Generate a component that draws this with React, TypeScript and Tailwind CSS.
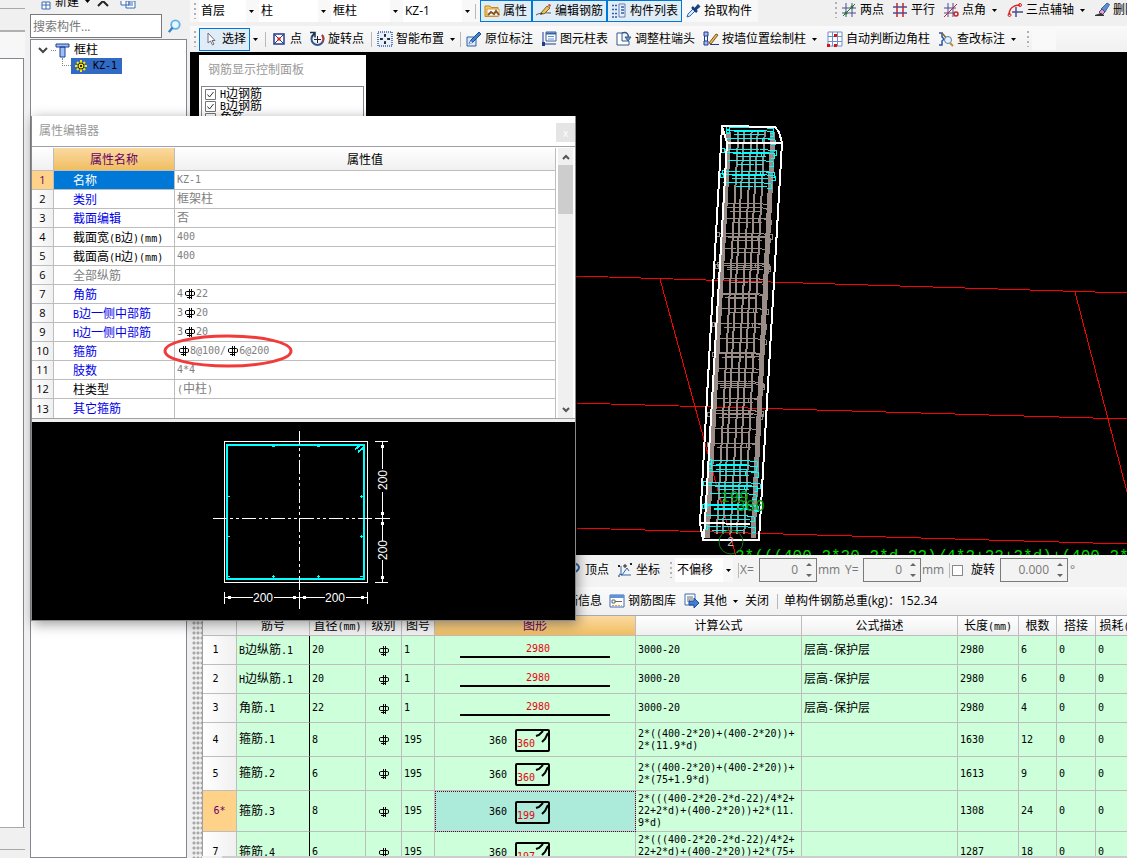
import type { ReactNode } from "react";
import clsx from "clsx";

/* ---------- text helpers ---------- */

// Latin runs use a 6px wide mono face, Chinese runs stay on a 12px grid
function Mono({ children }: { children: string }) {
  const parts = children.split(/([\u4e00-\u9fff]+)/).filter(Boolean);
  return (
    <span className="inline-block align-middle font-['DejaVu_Sans_Mono','Noto_Sans_CJK_SC',monospace] text-[10px] leading-3">
      {parts.map((part, i) =>
        /[\u4e00-\u9fff]/.test(part) ? (
          <span key={i} className="text-xs leading-3">
            {part}
          </span>
        ) : (
          part
        )
      )}
    </span>
  );
}

function Rebar() {
  return (
    <svg viewBox="0 0 10 10" className="inline-block h-[10px] w-[10px] align-middle" fill="none" stroke="#000">
      <path d="M4.500 0v10M6.500 0v10M1.500 2.500h7q1 0 1 1.500v1q0 1.500-1 1.500h-7q-1 0-1-1.500v-1q0-1.500 1-1.500zM2 8.500h4" />
    </svg>
  );
}

function Value({ text }: { text: string }) {
  return (
    <span className="inline-flex items-center align-middle">
      {text.split(/(#)/).map((part, i) =>
        part === "#" ? (
          <span key={i} className="mr-px ml-[2px] flex">
            <Rebar />
          </span>
        ) : part ? (
          <Mono key={i}>{part}</Mono>
        ) : null
      )}
    </span>
  );
}

/* ---------- icons ---------- */

const icons: Record<string, ReactNode> = {
  attr: (
    <>
      <path d="M1 3h5l1 1.500h7v9H1z" fill="#f7c96b" stroke="#c8861c" />
      <path d="M3 6h12v7H3z" fill="#fff" stroke="#d89a3a" />
      <path d="M4 12l3-3 3 2 2-3 3 4" stroke="#7d5a2a" strokeWidth="2" fill="none" />
    </>
  ),
  pencil: (
    <>
      <path d="M0 12c5-3 10-2 15-2" stroke="#555" fill="none" />
      <path d="M5 10l6-7 3 2-6 6z" fill="#eac25c" stroke="#8b6420" />
      <path d="M12 2l1-1 2 1-1 2z" fill="#c33" />
      <path d="M4 12l1-2 2 1z" fill="#222" />
    </>
  ),
  list: (
    <>
      <path d="M1 2.500h5M1 6.500h5M1 10.500h5M1 14h5" stroke="#2e5fb0" strokeWidth="1.500" strokeDasharray="2 1" />
      <path d="M8 1h6v13H8z" fill="#e6effa" stroke="#6b7fa8" />
      <path d="M10 4h3M10 7h3M10 10h3" stroke="#2e5fb0" strokeWidth="1.500" />
    </>
  ),
  picker: (
    <>
      <path d="M2 14l1-3 6-6 2 2-6 6z" fill="#dcebfb" stroke="#2a67b8" />
      <path d="M7 4l5 5" stroke="#17407f" strokeWidth="2.500" />
      <path d="M9.500 5.500l3.500-4 2 2-4 3.500z" fill="#17407f" stroke="#17407f" />
    </>
  ),
  twoPoint: (
    <>
      <path d="M1 6h14M1 11h14M5 1v14M11 1v14" stroke="#4c4c94" />
      <path d="M2 14L14 2" stroke="#227722" />
      <circle cx="5" cy="11" r="1.500" fill="#227722" />
      <circle cx="11" cy="5" r="1.500" fill="#227722" />
    </>
  ),
  parallel: (
    <>
      <path d="M5 1v14M11 1v14" stroke="#c22" strokeWidth="1.500" />
      <path d="M1 5h14M1 11h14" stroke="#4c4c94" strokeWidth="1.500" />
    </>
  ),
  pointAngle: (
    <>
      <path d="M1 6h12M1 11h10M5 1v14M10 1v14" stroke="#4c4c94" />
      <path d="M1 15L14 2" stroke="#c22" />
      <circle cx="13" cy="12" r="2" stroke="#c22" fill="none" strokeWidth="1.500" />
    </>
  ),
  arcAxis: (
    <>
      <path d="M9 5v10M5 10h11" stroke="#4c4c94" strokeWidth="1.500" />
      <path d="M2 13C2 7 6 3 13 3" stroke="#d22" strokeWidth="1.500" fill="none" />
      <circle cx="2.500" cy="13" r="1.500" stroke="#d22" />
      <circle cx="13" cy="3" r="1.500" stroke="#d22" />
    </>
  ),
  eraser: (
    <>
      <path d="M7 7l6-6 2.500 1.500L11 10z" fill="#5b8fd6" stroke="#44699f" />
      <path d="M5 10l3-3 3 3-3 3z" fill="#d9a6c8" stroke="#5a3c80" />
      <path d="M1 13.500h9l-3-2z" fill="#333" stroke="#333" />
    </>
  ),
  arrow: <path d="M5 2v10l2.500-2 2 4 1.500-1-2-3.500h3z" fill="#fff" stroke="#6c6c84" />,
  point: (
    <>
      <path d="M3 3h10v10H3z" fill="#fff" stroke="#223a8c" strokeWidth="1.500" />
      <path d="M4 4l8 8M12 4l-8 8" stroke="#223a8c" />
      <path d="M6.500 6.500h3v3h-3z" fill="#d22" />
    </>
  ),
  rotate: (
    <>
      <path d="M4 4a6 6 0 1 0 9 0" stroke="#31588f" strokeWidth="2" fill="none" />
      <path d="M1 1.500h5v5M6 1.500l-3 4" stroke="#16304f" strokeWidth="1.500" fill="none" />
      <path d="M8.500 5v7M5 8.500h7" stroke="#223" />
      <path d="M13 4c2 2 2 5 0 7" stroke="#c33" strokeWidth="1.500" fill="none" />
    </>
  ),
  smart: (
    <>
      <path d="M1 1h14v14H1z" fill="#e8f0fb" stroke="#3562a5" strokeWidth="1.500" strokeDasharray="1 1" />
      <path d="M8 3v3M8 10v3M3 8h3M10 8h3" stroke="#111" strokeWidth="1.500" />
      <path d="M7 4h2M7 12h2M4 7v2M12 7v2" stroke="#111" />
    </>
  ),
  annotate: (
    <>
      <path d="M1 6h9v9H1z" fill="#dce9f9" stroke="#2d5fa8" />
      <path d="M3 13l2-4 8-8 2 2-8 8z" fill="#3f83cf" stroke="#1f4d8f" />
      <path d="M3 13l2-3 1 2z" fill="#fff" />
    </>
  ),
  tableCol: (
    <>
      <path d="M5 1h10v9H5z" fill="#fff" stroke="#3562a5" />
      <path d="M5 2.500h10" stroke="#3562a5" strokeWidth="2" />
      <path d="M7 5.500h6M7 8h6" stroke="#6b8fc9" />
      <path d="M2 1v14M1 13h14" stroke="#223a8c" />
      <path d="M1 11h3v4H1z" fill="#223a8c" />
    </>
  ),
  adjust: (
    <>
      <path d="M1 2h5v8h7v4H1z" fill="#fff" stroke="#31588f" />
      <path d="M6 2c5-2 7 2 6 5" stroke="#31588f" fill="none" strokeWidth="1.500" />
      <path d="M9 6h6l-3 4z" fill="#6c97cf" stroke="#31588f" />
    </>
  ),
  wall: (
    <>
      <path d="M1 1h4v4H1zM1 10h4v4H1z" fill="#9dc0ee" stroke="#223a8c" />
      <path d="M1.500 5v5M4.500 5v5M7 13.500h9" stroke="#223a8c" />
      <path d="M6 12l7-9 2 1-7 9z" fill="#e9bf55" stroke="#80511a" />
    </>
  ),
  grid: (
    <>
      <path d="M1 1h14v14H1z" fill="#fff" />
      <path d="M1 1v14M5.500 1v14M10.500 1v14M15 1v14M1 1h14M1 5.500h14M1 10.500h14M1 15h14" stroke="#6d8fc6" />
      <path d="M7 3h3v3H7zM0 13h3v3H0zM7 13h3v3H7z" fill="#d11" />
    </>
  ),
  check: (
    <>
      <path d="M1 2h3v4l2 2-2 2v4H1" stroke="#2456a8" strokeWidth="1.500" fill="none" />
      <path d="M4 2l6 7" stroke="#8b6420" strokeWidth="1.500" />
      <circle cx="10" cy="9" r="3.500" fill="#e5f1fb" stroke="#5580ae" />
      <path d="M12 12l3 3" stroke="#c88a3a" strokeWidth="2" />
    </>
  ),
  vertex: <path d="M6 3q5-3 7 2q0 3-4 5M9 12v2" stroke="#2f64ab" strokeWidth="2" fill="none" />,
  coord: (
    <>
      <path d="M4 4v9M2 12l3 1 5-7 2 3M4 13h10" stroke="#2f64ab" fill="none" />
      <path d="M1 3l2 2M3 3L1 5M13 1l2 2M15 1l-2 2M1 14h2M7 3h2v2H7z" stroke="#222" />
    </>
  ),
  library: (
    <>
      <path d="M1 2h14v12H1z" fill="#fff" stroke="#3b6bb4" />
      <path d="M1 3.500h14" stroke="#5e93dc" strokeWidth="3" />
      <path d="M3 7h3v3H3zM6 8.500h7" stroke="#666" fill="none" />
      <path d="M3 12.500h10" stroke="#e5a13c" strokeDasharray="2 1" />
    </>
  ),
  other: (
    <>
      <path d="M1 1h10v11H1z" fill="#fff" stroke="#3b6bb4" />
      <path d="M3 4h6M3 6h6M3 8h3" stroke="#666" />
      <path d="M5 8h5V5l5 5-5 5v-3H5z" fill="#3f7fd9" stroke="#1f4d8f" />
    </>
  ),
};

function Icon({ name }: { name: string }) {
  return (
    <svg viewBox="0 0 16 16" className="h-4 w-4 shrink-0" fill="none" aria-hidden="true">
      {icons[name]}
    </svg>
  );
}

function Caret() {
  return (
    <svg viewBox="0 0 5 3" className="h-[3px] w-[5px] shrink-0" aria-hidden="true">
      <path d="M0 0h5L2.500 3z" fill="#000" />
    </svg>
  );
}

/* ---------- toolbar parts ---------- */

function Grip() {
  return (
    <span className="mr-[3px] ml-1 h-4 w-[2px] shrink-0 bg-[repeating-linear-gradient(to_bottom,#b0b0b0_0_2px,transparent_2px_5px)]" />
  );
}

function Sep() {
  return <span className="h-[15px] w-px shrink-0 bg-[#b8b8b8]" />;
}

type ToolProps = { icon?: string; label: string; width: string; active?: boolean; caret?: boolean };

function Tool({ icon, label, width, active, caret }: ToolProps) {
  return (
    <button
      className={clsx(
        "flex h-full shrink-0 items-center gap-[3px] border text-left whitespace-nowrap",
        active ? "border-[#0078d7] bg-[#e0edf7] pl-[3px]" : "border-transparent",
        width
      )}
    >
      {icon && <Icon name={icon} />}
      <span>{label}</span>
      {caret && (
        <span className="pl-[3px]">
          <Caret />
        </span>
      )}
    </button>
  );
}

function Combo({ value, width, label }: { value: string; width: string; label: string }) {
  return (
    <span className={clsx("flex h-full shrink-0 items-center", width)}>
      <select aria-label={label} className="h-full min-w-0 flex-1 appearance-none bg-white pl-[2px] text-xs outline-none">
        <option>{value}</option>
      </select>
      <span className="flex h-full w-[10px] items-center justify-center bg-[#f8f8f8]">
        <Caret />
      </span>
    </span>
  );
}

function Spin({ id, value, width }: { id: string; value: string; width: string }) {
  return (
    <span className={clsx("flex h-6 shrink-0 items-center border border-[#7a7a7a] bg-[#f3f3f3] pr-1 text-[#777]", width)}>
      <input id={id} defaultValue={value} className="w-full min-w-0 flex-1 bg-transparent pr-2 text-right text-xs outline-none" />
      <svg viewBox="0 0 6 16" className="h-4 w-[6px]" fill="#666" aria-hidden="true">
        <path d="M3 1l3 3H0zM3 15l3-3H0z" />
      </svg>
    </span>
  );
}

function TopToolbars() {
  return (
    <header className="shrink-0 bg-[#f0f0f0] text-xs">
      <div className="flex h-[26px] items-start overflow-hidden">
        <div className="flex h-[22px] shrink-0 items-center bg-[#f8f8f8]">
          <Grip />
          <div className="flex h-full w-[281px] items-center gap-[3px]">
            <Combo label="楼层" value="首层" width="w-[57px]" />
            <Combo label="构件类别" value="柱" width="w-[69px]" />
            <Combo label="构件类型" value="框柱" width="w-[69px]" />
            <Combo label="构件名称" value="KZ-1" width="w-[69px]" />
            <Sep />
          </div>
          <Tool icon="attr" label="属性" width="w-[52px]" active />
          <Tool icon="pencil" label="编辑钢筋" width="w-[75px]" active />
          <Tool icon="list" label="构件列表" width="w-[75px]" active />
          <span className="w-[2px]" />
          <Tool icon="picker" label="拾取构件" width="w-[74px]" />
        </div>
        <div className="ml-[73px] flex h-5 shrink-0 items-center">
          <Grip />
          <Tool icon="twoPoint" label="两点" width="w-[51px]" />
          <Tool icon="parallel" label="平行" width="w-[51px]" />
          <Tool icon="pointAngle" label="点角" width="w-[64px]" caret />
          <Tool icon="arcAxis" label="三点辅轴" width="w-[87px]" caret />
          <Tool icon="eraser" label="删除" width="w-[51px]" />
        </div>
      </div>
      <div className="flex h-[26px] items-center overflow-hidden bg-linear-to-b from-[#fafafa] to-[#f0f0f0]">
        <Grip />
        <div className="flex h-[23px] shrink-0 items-center">
          <Tool icon="arrow" label="选择" width="w-[51px]" active />
          <span className="flex w-[15px] pl-[3px]">
            <Caret />
          </span>
          <Sep />
          <span className="w-1" />
          <Tool icon="point" label="点" width="w-[38px]" />
          <Tool icon="rotate" label="旋转点" width="w-[63px]" />
          <Sep />
          <span className="w-1" />
          <Tool icon="smart" label="智能布置" width="w-[84px]" caret />
          <Sep />
          <span className="w-1" />
          <Tool icon="annotate" label="原位标注" width="w-[75px]" />
          <Tool icon="tableCol" label="图元柱表" width="w-[75px]" />
          <Tool icon="adjust" label="调整柱端头" width="w-[87px]" />
          <Tool icon="wall" label="按墙位置绘制柱" width="w-[124px]" caret />
          <Tool icon="grid" label="自动判断边角柱" width="w-[111px]" />
          <Tool icon="check" label="查改标注" width="w-[86px]" caret />
        </div>
        <Grip />
        <span className="h-[22px] w-6 bg-[#f9f9f9]" />
      </div>
    </header>
  );
}

/* ---------- left side ---------- */

function EdgeStrip() {
  return (
    <div className="flex w-[25px] shrink-0 flex-col bg-[#f0f0f0]">
      <div className="h-[9px] border-b border-[#a8a8a8]" />
      <div className="h-[23px] border-b-2 border-[#b0b0b0]" />
      <div className="h-[26px] bg-[#f7f7f7]" />
      <div className="mr-px flex-1 border-t border-r border-[#828790] bg-white" />
      <div className="h-[23px] border-y border-[#a8a8a8]" />
      <div className="h-[8px]" />
    </div>
  );
}

function ComponentTree() {
  return (
    <aside className="mr-[3px] ml-[5px] flex w-[157px] shrink-0 flex-col text-xs">
      <div className="flex h-[13px] shrink-0 items-end gap-1 overflow-hidden pl-[11px]">
        <svg viewBox="0 0 10 12" className="h-3 w-[10px]" fill="#fff" stroke="#3b6bb4" aria-hidden="true">
          <path d="M1 1h8v7H1zM1 4h8M5 1v7" />
        </svg>
        <button className="flex h-[13px] items-center gap-[6px] pb-[10px] leading-3 whitespace-nowrap">
          新建 <Caret />
        </button>
        <svg viewBox="0 0 12 12" className="ml-[3px] h-3 w-3 shrink-0" fill="none" stroke="#222" strokeWidth="2" aria-hidden="true">
          <path d="M1 5l5-5 5 5" />
        </svg>
        <svg viewBox="0 0 16 12" className="ml-[7px] h-3 w-4 shrink-0" fill="#fff" stroke="#3b6bb4" aria-hidden="true">
          <path d="M1 -1h8v5H1zM6 0h9v7H6zM8 2h5M8 4h5" />
        </svg>
      </div>
      <div className="flex h-[26px] shrink-0 items-start pt-px">
        <input
          aria-label="搜索构件"
          placeholder="搜索构件..."
          className="h-6 w-[132px] border border-[#7a7a7a] bg-white px-[2px] text-xs placeholder:text-[#777] focus:outline-none"
        />
        <button aria-label="搜索" className="ml-[5px] flex h-6 w-4 items-center">
          <svg viewBox="0 0 16 16" className="h-[15px] w-[15px]" fill="none" aria-hidden="true">
            <circle cx="9" cy="6" r="4.500" stroke="#5fb3ea" strokeWidth="2" fill="#eaf6fe" />
            <path d="M6 9l-4 5" stroke="#3b7fc4" strokeWidth="2.500" />
          </svg>
        </button>
      </div>
      <div className="flex-1 border border-[#828790] bg-white pt-[2px]">
        <div className="flex h-4 items-center pl-[7px]">
          <svg viewBox="0 0 36 16" className="h-4 w-9 shrink-0" fill="none" aria-hidden="true">
            <path d="M1 6l4 4 4-4" stroke="#444" strokeWidth="2" />
            <path d="M13 8.500h5" stroke="#888" strokeDasharray="1 1" />
            <path d="M18 2h13v3H18zM22 5h5v10h-5z" fill="#9cc0f2" stroke="#1f3f95" />
          </svg>
          <span>框柱</span>
        </div>
        <div className="flex h-4 items-center pl-[31px]">
          <span className="mb-2 h-2 w-[9px] shrink-0 border-b border-l border-dotted border-[#888]" />
          <span className="flex h-4 w-[51px] items-center bg-[#316ac5] pl-1">
            <svg viewBox="0 0 12 12" className="mr-[6px] h-3 w-3" fill="none" aria-hidden="true">
              <path d="M6 0v12M0 6h12M2 2l8 8M10 2l-8 8" stroke="#ffe600" strokeWidth="2" />
              <circle cx="6" cy="6" r="3" fill="#ffe600" stroke="#222" />
              <path d="M5 5h2v2H5z" fill="#222" />
            </svg>
            <Mono>KZ-1</Mono>
          </span>
        </div>
      </div>
    </aside>
  );
}

/* ---------- 3D view ---------- */

const leftBar = (y: number) => 729 - (y - 143) * 0.055;
const rightBar = (y: number) => 773 - (y - 143) * 0.05;

function at(t: number, y: number) {
  return leftBar(y) + (rightBar(y) - leftBar(y)) * t;
}

type StirrupProps = { from: number; to: number; step: number; color: string };

function Stirrups({ from, to, step, color }: StirrupProps) {
  const count = Math.floor((to - from) / step);
  return (
    <g stroke={color} fill="none" shapeRendering="crispEdges">
      {Array.from({ length: count }, (_, i) => {
        const y = Math.round(from + i * step);
        const l = leftBar(y) - (i % 3) * 2;
        const r = rightBar(y) + ((i * 2) % 5);
        return (
          <g key={i}>
            <path d={`M${l} ${y}L${at(0.3, y)} ${y - 1}H${at(0.7, y)}L${r} ${y + 1}v4h-4`} />
            <path d={`M${at(i % 2 ? 0.2 : 0.1, y)} ${y + 3}H${at(0.6, y)}l${8 + (i % 3) * 3} 1`} />
            {i % 2 === 0 && <path d={`M${l - 3} ${y - 2}h3v4h-3z`} />}
            {i % 3 === 1 && <path d={`M${at(0.75, y)} ${y + 4}v-5h8`} />}
          </g>
        );
      })}
    </g>
  );
}

function ModelView() {
  return (
    <svg viewBox="190 52 937 503" preserveAspectRatio="xMidYMid slice" className="block h-full w-full" fill="none">
      <g stroke="#f00" shapeRendering="crispEdges">
        <path d="M190 265L576 276L1127 293M190 391L576 403L1127 419M190 517L576 528L1127 544M660 279L737 560M1075 292L1127 492" />
      </g>
      <g stroke="#9a8c86" shapeRendering="crispEdges">
        <path d="M729 132L707 538M773 132L753 538" strokeWidth="5" />
        {[0.2, 0.33, 0.5, 0.64, 0.8].map((t) => (
          <path key={t} d={`M${at(t, 130)} 130L${at(t, 534)} 534`} strokeWidth="2" />
        ))}
      </g>
      <Stirrups from={204} to={462} step={15} color="#9a8c86" />
      <Stirrups from={208} to={462} step={29} color="#9a8c86" />
      <Stirrups from={128} to={204} step={11} color="#00ffff" />
      <Stirrups from={131} to={198} step={22} color="#00ffff" />
      <Stirrups from={461} to={540} step={11} color="#00ffff" />
      <Stirrups from={466} to={530} step={20} color="#00ffff" />
      <g stroke="#fff" strokeWidth="2" shapeRendering="crispEdges">
        <path d="M727 143L722 126L775 127L779 132L782 143zM722 126L700 523L703 540H759L782 143M727 143L704 538" />
        <path d="M700 523L750 524" />
      </g>
      <g fill="#009c10" className="font-['Liberation_Mono',monospace] text-base">
        <text x="720" y="502">199</text>
        <text x="736" y="511">360</text>
        <text x="735" y="561" fill="#00d800">2*(((400-2*20-2*d-22)/4*2+22+2*d)+(400-2*20))+2*(11.9*d)</text>
        <text x="727" y="546" fill="#bbb" className="text-xs">2</text>
      </g>
      <circle cx="731" cy="542" r="12" stroke="#0a7a14" />
    </svg>
  );
}

function RebarPanel() {
  return (
    <div className="absolute top-[3px] left-[9px] w-[167px] bg-white px-[2px]">
      <h2 className="h-[31px] pl-[7px] text-xs leading-[30px] text-[#999]">钢筋显示控制面板</h2>
      <div className="flex h-[60px] flex-col overflow-hidden border border-[#828790] pt-px">
        {["H边钢筋", "B边钢筋", "角筋"].map((name) => (
          <label key={name} className="flex h-3 shrink-0 items-center gap-1 pl-[3px]">
            <input type="checkbox" defaultChecked className="peer sr-only" />
            <svg viewBox="0 0 11 11" className="h-[11px] w-[11px] shrink-0" fill="#fff" stroke="#777" aria-hidden="true">
              <path d="M.5.5h10v10H.5z" />
              <path d="M2.500 5.500l2 2.500 4-5" stroke="#333" fill="none" />
            </svg>
            <Mono>{name}</Mono>
          </label>
        ))}
      </div>
    </div>
  );
}

/* ---------- bottom toolbars and table ---------- */

function OffsetBar() {
  return (
    <div className="flex h-8 shrink-0 items-center overflow-hidden bg-[#f3f3f3] pb-[2px] pl-[375px] text-xs">
      <Tool icon="vertex" label="顶点" width="w-[51px]" />
      <Tool icon="coord" label="坐标" width="w-[50px]" />
      <span className="flex h-6 w-[72px] shrink-0 items-center">
        <Grip />
        <Combo label="偏移方式" value="不偏移" width="w-[58px]" />
      </span>
      <Sep />
      <label htmlFor="offset-x" className="w-5 shrink-0 pl-px text-[#777]">X=</label>
      <Spin id="offset-x" value="0" width="w-[58px]" />
      <span className="w-7 shrink-0 pl-px text-[#777]">mm</span>
      <label htmlFor="offset-y" className="w-[18px] shrink-0 text-[#777]">Y=</label>
      <Spin id="offset-y" value="0" width="w-[58px]" />
      <span className="w-7 shrink-0 pl-px text-[#777]">mm</span>
      <Sep />
      <label className="flex w-[50px] shrink-0 items-center gap-2 pl-[2px]">
        <input type="checkbox" className="h-[11px] w-[11px] appearance-none border border-[#888] bg-white" />
        旋转
      </label>
      <Spin id="rotate" value="0.000" width="w-[68px]" />
      <label htmlFor="rotate" className="pl-[2px] text-[#777]">°</label>
    </div>
  );
}

function InfoBar() {
  return (
    <div className="flex h-[29px] shrink-0 items-center overflow-hidden border-b border-[#a9a9b2] bg-linear-to-b from-[#fbfbfb] to-[#f0f0f0] pl-[363px] text-xs">
      <Tool label="钢筋信息" width="w-[55px]" />
      <Tool icon="library" label="钢筋图库" width="w-[75px]" />
      <Tool icon="other" label="其他" width="w-[61px]" caret />
      <Tool label="关闭" width="w-[33px]" />
      <Sep />
      <span className="pl-[6px] whitespace-nowrap">单构件钢筋总重(kg)：152.34</span>
    </div>
  );
}

const columns = [
  { title: "", width: "w-[34px]" },
  { title: "筋号", width: "w-[73px]" },
  { title: "直径(mm)", width: "w-[56px]" },
  { title: "级别", width: "w-[36px]" },
  { title: "图号", width: "w-[33px]" },
  { title: "图形", width: "w-[201px]" },
  { title: "计算公式", width: "w-[166px]" },
  { title: "公式描述", width: "w-[156px]" },
  { title: "长度(mm)", width: "w-[61px]" },
  { title: "根数", width: "w-[38px]" },
  { title: "搭接", width: "w-[39px]" },
  { title: "损耗(%)", width: "w-[50px]" },
];

const COVER = "层高-保护层";
const LONG = "2*(((400-2*20-2*d-22)/4*2+22+2*d)+(400-2*20))+2*";

const bars = [
  { no: "1", name: "B边纵筋.1", dia: "20", shape: "1", size: "2980", formula: "3000-20", note: COVER, length: "2980", count: "6", height: "h-[29px]" },
  { no: "2", name: "H边纵筋.1", dia: "20", shape: "1", size: "2980", formula: "3000-20", note: COVER, length: "2980", count: "6", height: "h-[29px]" },
  { no: "3", name: "角筋.1", dia: "22", shape: "1", size: "2980", formula: "3000-20", note: COVER, length: "2980", count: "4", height: "h-[29px]" },
  { no: "4", name: "箍筋.1", dia: "8", shape: "195", size: "360", formula: "2*((400-2*20)+(400-2*20))+2*(11.9*d)", note: "", length: "1630", count: "12", height: "h-[34px]" },
  { no: "5", name: "箍筋.2", dia: "6", shape: "195", size: "360", formula: "2*((400-2*20)+(400-2*20))+2*(75+1.9*d)", note: "", length: "1613", count: "9", height: "h-[34px]" },
  { no: "6*", name: "箍筋.3", dia: "8", shape: "195", size: "199", formula: LONG + "(11.9*d)", note: "", length: "1308", count: "24", height: "h-[41px]" },
  { no: "7", name: "箍筋.4", dia: "6", shape: "195", size: "197", formula: LONG + "(75+1.9*d)", note: "", length: "1287", count: "18", height: "h-[41px]" },
];

function BarShape({ shape, size }: { shape: string; size: string }) {
  if (shape === "1") {
    return (
      <div className="mx-auto flex w-[150px] justify-center border-b-2 border-black pb-px pl-[6px] text-red-600">
        <Mono>{size}</Mono>
      </div>
    );
  }
  return (
    <div className="flex items-center pt-[2px] pl-[54px]">
      <Mono>360</Mono>
      <span className="ml-2 flex h-[23px] w-[35px] items-end rounded-[2px] border-2 border-black text-red-600">
        <Mono>{size}</Mono>
        <svg viewBox="0 0 13 19" className="h-[19px] w-[13px] shrink-0" stroke="#000" strokeWidth="2" fill="none" aria-hidden="true">
          <path d="M1 5l3-1 4-4M7 11l3-3 3-6" />
        </svg>
      </span>
    </div>
  );
}

function BarTable() {
  const cell = "border-r border-b border-[#bdbdbd] p-0 pl-[2px] text-left leading-3";
  return (
    <div className="flex h-[242px] shrink-0 bg-[#f0f0f0]">
      <div className="ml-[2px] w-[10px] shrink-0 bg-[radial-gradient(circle_at_2px_2px,#a8a8a8_1px,transparent_2px)] bg-size-[4px_5px]" />
      <div className="flex min-w-0 flex-1 flex-col overflow-hidden">
        <div className="min-h-0 flex-1 overflow-hidden bg-white">
          <table className="w-[943px] table-fixed border-separate border-spacing-0 border-l border-[#a0a0a0] text-xs">
            <thead>
              <tr className="h-5">
                {columns.map((c) => (
                  <th
                    key={c.title}
                    className={clsx(
                      "border-r border-b border-[#bdbdbd] p-0 pt-[2px] text-center leading-3 font-normal whitespace-nowrap",
                      c.width,
                      c.title === "图形" ? "bg-linear-to-b from-[#fbd9a0] to-[#f0be60] text-[#660066]" : "bg-linear-to-b from-white to-[#f0f0f0]"
                    )}
                  >
                    <Mono>{c.title}</Mono>
                  </th>
                ))}
              </tr>
            </thead>
            <tbody className="bg-[#ccffda]">
              {bars.map((b) => {
                const current = b.no === "6*";
                return (
                  <tr key={b.no} className={b.height}>
                    <th
                      className={clsx(
                        "border-r border-b border-[#bdbdbd] p-0 text-center leading-3 font-normal",
                        current ? "bg-[#ffd28a] text-[#660066]" : "bg-linear-to-r from-white to-[#f0f0f0] pr-2"
                      )}
                    >
                      <Mono>{b.no}</Mono>
                    </th>
                    <td className="border-r border-b border-r-black border-b-[#bdbdbd] p-0 pl-[2px] leading-3 whitespace-nowrap"><Mono>{b.name}</Mono></td>
                    <td className={cell}><Mono>{b.dia}</Mono></td>
                    <td className="border-r border-b border-[#bdbdbd] p-0 text-center leading-3"><Rebar /></td>
                    <td className={cell}><Mono>{b.shape}</Mono></td>
                    <td className={clsx("border-r border-b border-[#bdbdbd] p-0 leading-3", current && "bg-[#aceada] outline-1 -outline-offset-1 outline-[#660033] outline-dotted")}>
                      <BarShape shape={b.shape} size={b.size} />
                    </td>
                    <td className={clsx(cell, "pr-1 break-all")}><Mono>{b.formula}</Mono></td>
                    <td className={cell}><Mono>{b.note}</Mono></td>
                    <td className={cell}><Mono>{b.length}</Mono></td>
                    <td className={cell}><Mono>{b.count}</Mono></td>
                    <td className={cell}><Mono>0</Mono></td>
                    <td className={cell}><Mono>0</Mono></td>
                  </tr>
                );
              })}
            </tbody>
          </table>
        </div>
        <div className="ml-5 h-[2px] shrink-0 bg-[#cdcdcd]" />
      </div>
    </div>
  );
}

/* ---------- property editor ---------- */

const props = [
  { name: "名称", value: "KZ-1", tone: "bg-[#0078d7] text-white" },
  { name: "类别", value: "框架柱", tone: "text-[#0000e8]" },
  { name: "截面编辑", value: "否", tone: "text-[#0000e8]" },
  { name: "截面宽(B边)(mm)", value: "400", tone: "text-black" },
  { name: "截面高(H边)(mm)", value: "400", tone: "text-black" },
  { name: "全部纵筋", value: "", tone: "text-[#808080]" },
  { name: "角筋", value: "4#22", tone: "text-[#0000e8]" },
  { name: "B边一侧中部筋", value: "3#20", tone: "text-[#0000e8]" },
  { name: "H边一侧中部筋", value: "3#20", tone: "text-[#0000e8]" },
  { name: "箍筋", value: "#8@100/#6@200", tone: "text-[#0000e8]" },
  { name: "肢数", value: "4*4", tone: "text-[#0000e8]" },
  { name: "柱类型", value: "(中柱)", tone: "text-black" },
  { name: "其它箍筋", value: "", tone: "text-[#0000e8]" },
];

function SectionDrawing() {
  return (
    <svg viewBox="32 422 543 198" className="block h-[198px] w-full bg-black" fill="none" shapeRendering="crispEdges">
      <path d="M224.500 441.500h143v141h-143z" stroke="#fff" />
      <path d="M227 445h137v134H227z" stroke="#0ff" strokeWidth="2" />
      <path d="M355 449l5-3M358 452l5-4" stroke="#0ff" strokeWidth="2" />
      <path
        d="M272 446.500h3M317 446.500h3M272 576.500h3M317 576.500h3M273.500 575v3M318.500 575v3M228 496.500h2M228 536.500h2M228 576.500h2M360 496.500h3M360 536.500h3M361.500 495v3M361.500 535v3M360 576.500h3"
        stroke="#0ff"
      />
      <path d="M299.500 431v178M213 518.500h177" stroke="#fff" strokeDasharray="14 3 3 3 3 3" />
      <path d="M375 441.500h13M375 518.500h15M375 582.500h13M382.500 441v28M382.500 492v49M382.500 560v23" stroke="#fff" />
      <path d="M224.500 592v12M367.500 592v12M224 597.500h29M274 597.500h51M346 597.500h22M299.500 592v14" stroke="#fff" />
      <path
        d="M225 597.500l6-2v4zM299 597.500l-6-2v4zM300 597.500l6-2v4zM367 597.500l-6-2v4zM382.500 442l-2 6h4zM382.500 518l-2-6h4zM382.500 519l-2 6h4zM382.500 582l-2-6h4z"
        fill="#fff"
      />
      <g fill="#fff" className="font-['Liberation_Sans',sans-serif] text-xs">
        <text x="253" y="602">200</text>
        <text x="325" y="602">200</text>
        <text transform="translate(387 490) rotate(-90)">200</text>
        <text transform="translate(387 560) rotate(-90)">200</text>
      </g>
    </svg>
  );
}

function PropertyEditor() {
  return (
    <section className="absolute top-[116px] left-[31px] w-[545px] border border-t-0 border-[#8a8a8a] bg-white shadow-[2px_3px_12px_rgba(0,0,0,0.4)]">
      <div className="flex h-[30px] items-center justify-between pl-[7px]">
        <h1 className="text-xs text-[#999]">属性编辑器</h1>
        <button aria-label="关闭" className="mt-[3px] h-[19px] w-[19px] bg-[#e5e5e5] text-[10px] leading-4 text-white">
          x
        </button>
      </div>
      <div className="relative flex border-y border-[#a0a0a8] pt-px pr-[2px]">
        <table className="flex-1 table-fixed border-separate border-spacing-0 text-xs">
          <thead>
            <tr className="h-[23px]">
              <th className="w-[22px] border-r border-b border-[#bdbdbd] bg-linear-to-b from-white to-[#f0f0f0]" />
              <th className="w-[121px] border-r border-b border-[#bdbdbd] bg-linear-to-b from-[#fbd9a0] to-[#f0be60] p-0 pt-px font-normal text-[#660066]">属性名称</th>
              <th className="border-r border-b border-[#bdbdbd] bg-linear-to-b from-white to-[#f0f0f0] p-0 pt-px font-normal">属性值</th>
            </tr>
          </thead>
          <tbody>
            {props.map((p, i) => (
              <tr key={p.name} className="h-[19px]">
                <th
                  className={clsx(
                    "border-r border-[#bdbdbd] p-0 text-center text-[11px] leading-[18px] font-normal",
                    i < props.length - 1 && "border-b",
                    i === 0 ? "bg-[#ffd28a] text-[#660066]" : "bg-linear-to-r from-white to-[#f0f0f0]"
                  )}
                >
                  {i + 1}
                </th>
                <td
                  className={clsx(
                    "border-r border-[#bdbdbd] p-0 pt-[2px] pl-[19px] leading-3 whitespace-nowrap",
                    i < props.length - 1 && "border-b",
                    p.tone
                  )}
                >
                  <Mono>{p.name}</Mono>
                </td>
                <td className={clsx("border-r border-[#bdbdbd] p-0 pl-[2px] leading-3 text-[#808080]", i < props.length - 1 && "border-b")}>
                  <Value text={p.value} />
                </td>
              </tr>
            ))}
          </tbody>
        </table>
        <div className="ml-[2px] flex w-[15px] flex-col items-center bg-[#f0f0f0]">
          <svg viewBox="0 0 8 17" className="h-[17px] w-2" fill="none" stroke="#555" strokeWidth="2" aria-hidden="true">
            <path d="M1 11l3-3 3 3" />
          </svg>
          <div className="h-[49px] w-full bg-[#cdcdcd]" />
          <span className="flex-1" />
          <svg viewBox="0 0 8 17" className="h-[17px] w-2" fill="none" stroke="#555" strokeWidth="2" aria-hidden="true">
            <path d="M1 7l3 3 3-3" />
          </svg>
        </div>
        <svg viewBox="0 0 130 34" className="absolute top-[187px] left-[131px] h-[34px] w-[130px]" fill="none" aria-hidden="true">
          <ellipse cx="65" cy="17" rx="63" ry="15" stroke="#f23a3a" strokeWidth="3" />
        </svg>
      </div>
      <div className="h-[3px] bg-[#f0f0f0]" />
      <SectionDrawing />
    </section>
  );
}

export default function App() {
  return (
    <div className="relative flex h-screen overflow-hidden bg-[#f0f0f0] font-['Open_Sans','Noto_Sans_CJK_SC',sans-serif] text-black">
      <EdgeStrip />
      <ComponentTree />
      <main className="flex min-w-0 flex-1 flex-col">
        <TopToolbars />
        <div className="relative min-h-0 flex-1 overflow-hidden bg-black">
          <ModelView />
          <RebarPanel />
        </div>
        <OffsetBar />
        <InfoBar />
        <BarTable />
      </main>
      <PropertyEditor />
    </div>
  );
}
